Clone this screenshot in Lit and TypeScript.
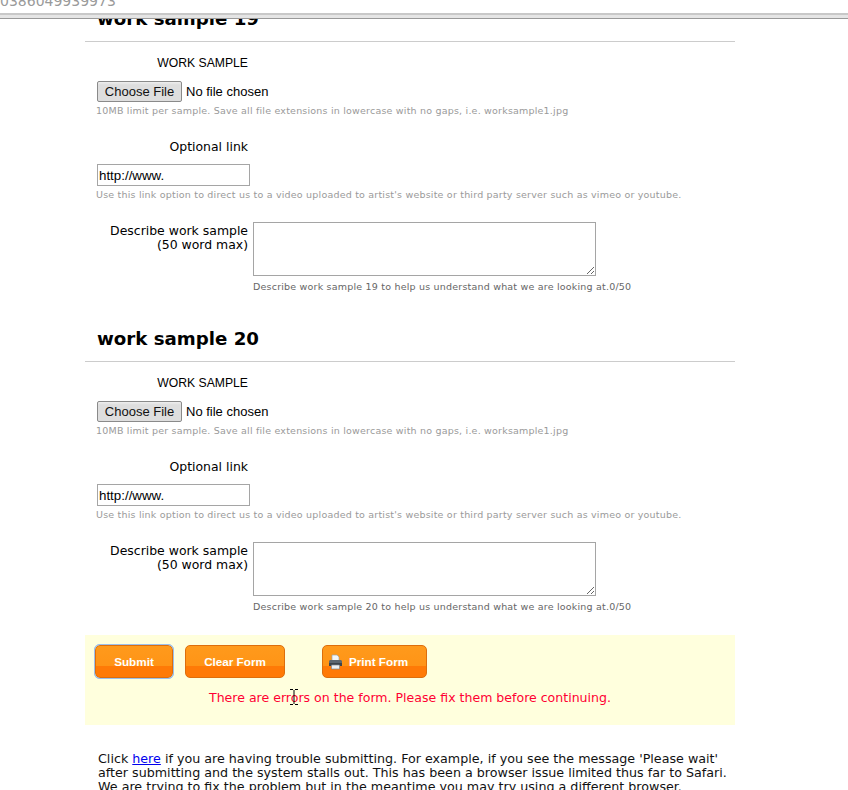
import { LitElement, html, css } from "lit";
import { customElement } from "lit/decorators.js";

@customElement("app-root")
export class AppRoot extends LitElement {
  static styles = css`
    :host { display: block; width: 848px; height: 790px; overflow: hidden; background: #fff; color: #000; font-family: "DejaVu Sans", Verdana, sans-serif; font-size: 12.45px; line-height: 14px; position: relative; }
    .topbar { height: 13px; overflow: hidden; }
    .topnum { margin-top: -7px; font-size: 14px; line-height: 16px; color: #9a9a9a; }
    .rules { height: 6px; box-sizing: border-box; background: #e5e5e5; border-top: 2px solid #c8c8c8; border-bottom: 1px solid #999; }
    .main { height: 771px; overflow: hidden; }
    .scroll { margin: -12px 0 0 85px; width: 650px; }
    h2 { margin: 34px 0 0; padding: 0 0 10px 12px; font-size: 18.2px; line-height: 24px; font-weight: 700; border-bottom: 1px solid #ccc; }
    .sec:first-child h2 { margin-top: 0; }
    .lab { width: 163px; text-align: right; }
    .l1 { margin-top: 14px; font-family: "Liberation Sans", Arial, sans-serif; font-size: 12.2px; }
    .filerow { margin: 11px 0 0 12px; display: flex; align-items: center; height: 21px; font-family: "Liberation Sans", Arial, sans-serif; font-size: 13px; }
    .filebtn { box-sizing: border-box; width: 85px; height: 21px; padding: 0; border: 1px solid #8a8a8a; border-radius: 2px; background: linear-gradient(#efefef, #dedede 15%, #dedede); font: inherit; color: #111; margin-right: 4px; }
    .hint { margin: 3px 0 0 11px; font-size: 9.5px; line-height: 12px; color: #9a9a9a; letter-spacing: 0.2px; white-space: nowrap; }
    .l2 { margin-top: 23px; }
    .url { display: block; box-sizing: border-box; width: 153px; height: 22px; margin: 10px 0 0 12px; padding: 0 1px; border: 1px solid #a5a5a5; font-family: "Liberation Sans", Arial, sans-serif; font-size: 13.33px; color: #000; background: #fff; outline: none; }
    .descrow { display: flex; margin-top: 21px; }
    .descrow .lab { padding-top: 2px; }
    .ta { display: block; box-sizing: border-box; width: 343px; height: 54px; margin: 0 0 0 5px; padding: 2px; border: 1px solid #a5a5a5; background: #fff; outline: none; resize: both; }
    .count { margin: 5px 0 0 168px; font-size: 9.5px; line-height: 12px; color: #666; letter-spacing: 0.2px; white-space: nowrap; }
    .band { margin-top: 22px; height: 90px; box-sizing: border-box; padding: 10px 0 0 10px; background: #ffffdd; }
    .btns { display: flex; align-items: flex-start; height: 33px; }
    .btn { box-sizing: border-box; height: 33px; display: flex; align-items: center; justify-content: center; gap: 6px; padding: 0; border: 1px solid #dd6e0c; border-radius: 5px; background: linear-gradient(#ff9a1c 0, #ff9416 64%, #ff7a06 65%, #ff7a06 100%); color: #fff; font-family: "Liberation Sans", Arial, sans-serif; font-weight: 700; font-size: 11.7px; }
    .submit { width: 78px; outline: 1px solid #9cc0ec; box-shadow: 0 0 0 1px #9cc0ec; }
    .clear { width: 100px; margin-left: 12px; }
    .print { width: 105px; margin-left: 37px; justify-content: flex-start; padding-left: 5px; }
    .err { margin: 13px 0 0 114px; color: #ff0033; font-size: 12.56px; white-space: nowrap; }
    .note { margin: 27px 0 0 13px; width: 640px; color: #111; font-size: 12.7px; }
    .note a { color: #00e; text-decoration: underline; }
    .cursor { position: absolute; left: 290px; top: 689px; }
  `;

  section(n: number) {
    return html`<div class="sec">
      <h2>work sample ${n}</h2>
      <div class="lab l1">WORK SAMPLE</div>
      <div class="filerow"><button class="filebtn">Choose File</button><span>No file chosen</span></div>
      <div class="hint">10MB limit per sample. Save all file extensions in lowercase with no gaps, i.e. worksample1.jpg</div>
      <div class="lab l2">Optional link</div>
      <input class="url" .value=${"http://www."} />
      <div class="hint">Use this link option to direct us to a video uploaded to artist's website or third party server such as vimeo or youtube.</div>
      <div class="descrow">
        <div class="lab">Describe work sample<br />(50 word max)</div>
        <textarea class="ta"></textarea>
      </div>
      <div class="count">Describe work sample ${n} to help us understand what we are looking at.0/50</div>
    </div>`;
  }

  render() {
    return html`
      <div class="topbar"><div class="topnum">0386049939973</div></div>
      <div class="rules"></div>
      <div class="main"><div class="scroll">
        ${this.section(19)}
        ${this.section(20)}
        <div class="band">
          <div class="btns">
            <button class="btn submit">Submit</button>
            <button class="btn clear">Clear Form</button>
            <button class="btn print">
              <svg width="15" height="16" viewBox="0 0 15 16">
                <path d="M4 1h5l2 2v4H4z" fill="#f4f6f8" stroke="#9aa4ad" stroke-width=".7"/>
                <path d="M1 7.500C1 6.600 1.700 6 2.500 6h10c.8 0 1.500.6 1.500 1.500V12H1z" fill="#5b6670"/>
                <rect x="1" y="9" width="13" height="3" fill="#3c444c"/>
                <path d="M3.500 11h8v4h-8z" fill="#eef1f3" stroke="#7d8790" stroke-width=".7"/>
              </svg>
              <span>Print Form</span>
            </button>
          </div>
          <div class="err">There are errors on the form. Please fix them before continuing.</div>
        </div>
        <div class="note">Click <a href="#">here</a> if you are having trouble submitting. For example, if you see the message 'Please wait' after submitting and the system stalls out. This has been a browser issue limited thus far to Safari. We are trying to fix the problem but in the meantime you may try using a different browser.</div>
      </div></div>
      <svg class="cursor" width="8" height="16" viewBox="0 0 8 16">
        <path d="M0 .5h3M5 .5h3M4 1v14M0 15.500h3M5 15.500h3" stroke="#000" stroke-width="1" fill="none"/>
      </svg>
    `;
  }
}
